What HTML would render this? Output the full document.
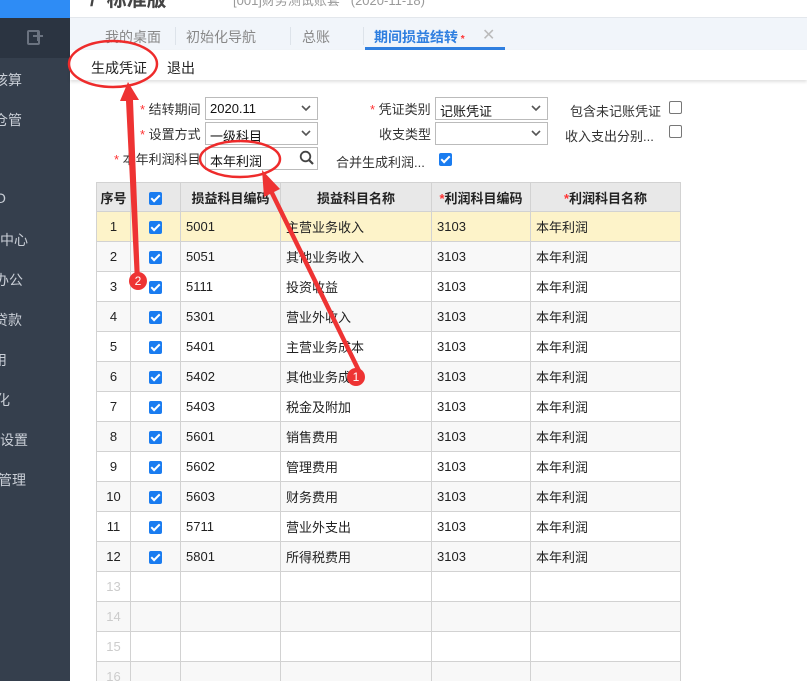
<!DOCTYPE html>
<html><head><meta charset="utf-8"><style>
*{margin:0;padding:0;box-sizing:border-box}
html,body{width:807px;height:681px;overflow:hidden}
body{background:#fff;font-family:"Liberation Sans","Noto Sans CJK SC",sans-serif;font-size:13px;color:#222;position:relative}
.abs{position:absolute}
#side{left:0;top:0;width:70px;height:681px;background:#353f4d;overflow:hidden}
#side .it{position:absolute;color:#c9ced6;font-size:14px;white-space:nowrap}
.tab{position:absolute;top:27px;font-size:14px;color:#888}
.sep{position:absolute;top:27px;width:1px;height:18px;background:#dde3ea}
.lbl{position:absolute;font-size:13px;color:#333;white-space:nowrap}
.r{color:#f33}
.sel{position:absolute;height:23px;border:1px solid #bbb;background:#fff;font-size:13px;padding:3px 4px;color:#111}
.sel svg{position:absolute;right:6px;top:7px}
.cb{position:absolute;width:13px;height:13px;border:1px solid #777;border-radius:2px;background:#fff}
.ck{display:inline-block;width:13px;height:13px;background:#1a7cf0;border-radius:2px;position:relative;vertical-align:middle}
.ck:after{content:"";position:absolute;left:4px;top:1px;width:3px;height:7px;border:solid #fff;border-width:0 2px 2px 0;transform:rotate(45deg)}
table{position:absolute;left:96px;top:182px;border-collapse:collapse;font-size:13px}
td,th{border:1px solid #d2d2d2;height:30px;padding:0 5px;text-align:left;white-space:nowrap}
th{background:#e8e8e8;font-weight:bold;text-align:center;height:29px}
td.c{text-align:center}
tr.y td{background:#fdf3c9}
tr.g td{background:#f8f8f8}
td.n{text-align:center;color:#ccc}
</style></head><body>
<div id="side" class="abs">
<div class="abs" style="left:0;top:0;width:70px;height:18px;background:#2e8cf5"></div>
<div class="abs" style="left:0;top:18px;width:70px;height:40px;background:#2b3441"></div>
<div class="abs" style="left:27px;top:30px;width:13px;height:15px;border:2px solid #6b7380;border-radius:2px"></div>
<div class="abs" style="left:33px;top:35px;width:10px;height:2px;background:#6b7380"></div>
<div class="abs" style="left:37px;top:31px;width:2px;height:10px;background:#6b7380"></div>
<div class="it" style="left:-6px;top:70px">核算</div>
<div class="it" style="left:-6px;top:110px">仓管</div>
<div class="it" style="left:-5px;top:190px">O</div>
<div class="it" style="left:0;top:230px">中心</div>
<div class="it" style="left:-5px;top:270px">办公</div>
<div class="it" style="left:-6px;top:310px">贷款</div>
<div class="it" style="left:-7px;top:350px">用</div>
<div class="it" style="left:-4px;top:390px">化</div>
<div class="it" style="left:0;top:430px">设置</div>
<div class="it" style="left:-2px;top:470px">管理</div>
</div>
<div class="abs" style="left:70px;top:0;width:737px;height:18px;background:#fff;overflow:hidden">
<div class="abs" style="left:20px;top:-17px;font-size:20px;color:#444;font-weight:bold">/ &nbsp;标准版</div>
<div class="abs" style="left:163px;top:-10px;font-size:13px;color:#999">[001]财务测试账套 &nbsp; (2020-11-18)</div>
</div>
<div class="abs" style="left:70px;top:17px;width:737px;height:1px;background:#e3e7ec"></div>
<div class="abs" style="left:70px;top:18px;width:737px;height:32px;background:#f1f5fa"></div>
<div class="tab" style="left:105px">我的桌面</div>
<div class="sep" style="left:175px"></div>
<div class="tab" style="left:186px">初始化导航</div>
<div class="sep" style="left:290px"></div>
<div class="tab" style="left:302px">总账</div>
<div class="sep" style="left:363px"></div>
<div class="tab" style="left:374px;color:#2f7fe0;font-weight:bold">期间损益结转<span class="r" style="font-size:10px"> *</span></div>
<div class="tab" style="left:482px;color:#bbb;font-size:16px;top:25px">✕</div>
<div class="abs" style="left:365px;top:47px;width:140px;height:3px;background:#2f7fe0"></div>
<div class="abs" style="left:70px;top:50px;width:737px;height:30px;background:#fff;box-shadow:0 2px 3px rgba(0,0,0,.12)"></div>
<div class="abs" style="left:91px;top:58px;font-size:14px">生成凭证</div>
<div class="abs" style="left:167px;top:58px;font-size:14px">退出</div>

<div class="lbl" style="left:140px;top:99px"><span class="r">* </span>结转期间</div>
<div class="sel" style="left:205px;top:97px;width:113px">2020.11<svg width="10" height="7"><path d="M1 1L5 5L9 1" stroke="#555" stroke-width="1.6" fill="none"/></svg></div>
<div class="lbl" style="left:140px;top:124px"><span class="r">* </span>设置方式</div>
<div class="sel" style="left:205px;top:122px;width:113px">一级科目<svg width="10" height="7"><path d="M1 1L5 5L9 1" stroke="#555" stroke-width="1.6" fill="none"/></svg></div>
<div class="lbl" style="left:114px;top:149px"><span class="r">* </span>本年利润科目</div>
<div class="sel" style="left:205px;top:147px;width:113px">本年利润<svg width="16" height="16" style="top:2px;right:2px"><circle cx="6.5" cy="6.5" r="4.8" stroke="#444" stroke-width="1.8" fill="none"/><path d="M10 10L14 14" stroke="#444" stroke-width="2.2"/></svg></div>
<div class="lbl" style="left:370px;top:99px"><span class="r">* </span>凭证类别</div>
<div class="sel" style="left:435px;top:97px;width:113px">记账凭证<svg width="10" height="7"><path d="M1 1L5 5L9 1" stroke="#555" stroke-width="1.6" fill="none"/></svg></div>
<div class="lbl" style="left:379px;top:124px">收支类型</div>
<div class="sel" style="left:435px;top:122px;width:113px"><svg width="10" height="7"><path d="M1 1L5 5L9 1" stroke="#555" stroke-width="1.6" fill="none"/></svg></div>
<div class="lbl" style="left:336px;top:152px">合并生成利润...</div>
<div class="abs" style="left:439px;top:151px"><span class="ck"></span></div>
<div class="lbl" style="left:570px;top:101px">包含未记账凭证</div>
<div class="cb" style="left:669px;top:101px"></div>
<div class="lbl" style="left:565px;top:126px">收入支出分别...</div>
<div class="cb" style="left:669px;top:125px"></div>

<table>
<tr><th style="width:34px;padding:0">序号</th><th style="width:50px"><span class="ck"></span></th><th style="width:100px">损益科目编码</th><th style="width:151px">损益科目名称</th><th style="width:99px"><span class="r">*</span>利润科目编码</th><th style="width:150px"><span class="r">*</span>利润科目名称</th></tr>
<tr class="y"><td class="c">1</td><td class="c"><span class="ck"></span></td><td>5001</td><td>主营业务收入</td><td>3103</td><td>本年利润</td></tr>
<tr class="g"><td class="c">2</td><td class="c"><span class="ck"></span></td><td>5051</td><td>其他业务收入</td><td>3103</td><td>本年利润</td></tr>
<tr><td class="c">3</td><td class="c"><span class="ck"></span></td><td>5111</td><td>投资收益</td><td>3103</td><td>本年利润</td></tr>
<tr class="g"><td class="c">4</td><td class="c"><span class="ck"></span></td><td>5301</td><td>营业外收入</td><td>3103</td><td>本年利润</td></tr>
<tr><td class="c">5</td><td class="c"><span class="ck"></span></td><td>5401</td><td>主营业务成本</td><td>3103</td><td>本年利润</td></tr>
<tr class="g"><td class="c">6</td><td class="c"><span class="ck"></span></td><td>5402</td><td>其他业务成本</td><td>3103</td><td>本年利润</td></tr>
<tr><td class="c">7</td><td class="c"><span class="ck"></span></td><td>5403</td><td>税金及附加</td><td>3103</td><td>本年利润</td></tr>
<tr class="g"><td class="c">8</td><td class="c"><span class="ck"></span></td><td>5601</td><td>销售费用</td><td>3103</td><td>本年利润</td></tr>
<tr><td class="c">9</td><td class="c"><span class="ck"></span></td><td>5602</td><td>管理费用</td><td>3103</td><td>本年利润</td></tr>
<tr class="g"><td class="c">10</td><td class="c"><span class="ck"></span></td><td>5603</td><td>财务费用</td><td>3103</td><td>本年利润</td></tr>
<tr><td class="c">11</td><td class="c"><span class="ck"></span></td><td>5711</td><td>营业外支出</td><td>3103</td><td>本年利润</td></tr>
<tr class="g"><td class="c">12</td><td class="c"><span class="ck"></span></td><td>5801</td><td>所得税费用</td><td>3103</td><td>本年利润</td></tr>
<tr><td class="n">13</td><td></td><td></td><td></td><td></td><td></td></tr>
<tr class="g"><td class="n">14</td><td></td><td></td><td></td><td></td><td></td></tr>
<tr><td class="n">15</td><td></td><td></td><td></td><td></td><td></td></tr>
<tr class="g"><td class="n">16</td><td></td><td></td><td></td><td></td><td></td></tr>
</table>

<svg class="abs" style="left:0;top:0" width="807" height="681">
<g fill="none" stroke="#ee2b2b" stroke-width="2.5">
<ellipse cx="113" cy="64" rx="44" ry="23"/>
<ellipse cx="240" cy="159" rx="40" ry="18"/>
</g>
<g fill="#ee3333">
<polygon points="359,376 363,374 274,192 280,189 262,170 264,197 270,194"/>
<polygon points="135,282 140,282 133,100 139,100 128,82 120,101 126,101"/>
<circle cx="138" cy="281" r="9"/>
<circle cx="356" cy="377" r="9"/>
</g>
<g fill="#fff" font-size="12" font-family="Liberation Sans" text-anchor="middle">
<text x="138" y="285">2</text><text x="356" y="381">1</text>
</g>
</svg>
</body></html>
